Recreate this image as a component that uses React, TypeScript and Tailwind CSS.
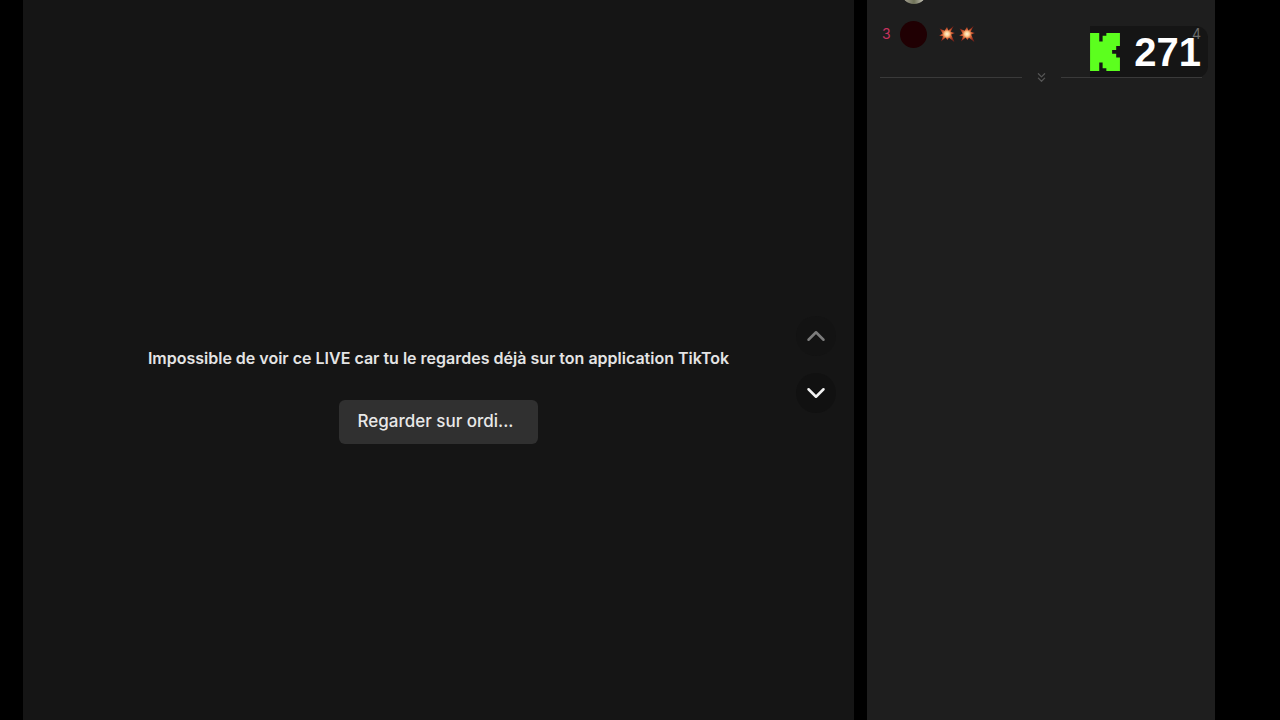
import { ChevronDown, ChevronUp, ChevronsDown } from 'lucide-react';

const BURST_POINTS =
  '8,1 9.4,4.6 14.6,0 11.6,5.8 16,7 12.2,8.6 15.4,16 10,11.8 8.4,14 6.6,11.6 2,15.6 4,10.2 0,9.8 3.6,7.4 0.6,2.4 5.6,4.8';

function Burst() {
  return (
    <svg viewBox="0 0 16 16" className="size-4" aria-hidden="true">
      <defs>
        <radialGradient id="burst">
          <stop offset="0%" stopColor="#fff6d8" />
          <stop offset="30%" stopColor="#fbc98c" />
          <stop offset="55%" stopColor="#d9683a" />
          <stop offset="100%" stopColor="#8a2318" />
        </radialGradient>
      </defs>
      <polygon points={BURST_POINTS} fill="url(#burst)" />
    </svg>
  );
}

function KLogo() {
  return (
    <svg viewBox="0 0 88 112" className="h-[38px] w-[30px]" aria-hidden="true">
      <path
        fill="#5cff1e"
        d="M0 0H27V25H37V8H48V0H88V38H77V50H65V61H77V72H88V112H48V104H37V87H27V112H0Z"
      />
    </svg>
  );
}

function LivePlayer() {
  return (
    <main className="relative flex flex-1 flex-col items-center justify-center bg-[#151515]">
      <div className="flex flex-col items-center gap-[30px] pt-[70px]">
        <p className="text-base font-semibold text-[#e4e4e4]">
          Impossible de voir ce LIVE car tu le regardes déjà sur ton application TikTok
        </p>
        <button className="h-11 rounded-md bg-[#303030] pr-6 pl-[18px] text-[17px] font-medium text-[#e8e8e8]">
          Regarder sur ordi...
        </button>
      </div>

      <div className="absolute inset-y-0 right-[18px] flex flex-col items-center justify-center gap-[17px] pt-2">
        <button
          aria-label="LIVE précédent"
          className="flex size-10 items-center justify-center rounded-full bg-[#131313] text-[#7c7c7c]"
        >
          <ChevronUp size={30} strokeWidth={2} />
        </button>
        <button
          aria-label="LIVE suivant"
          className="flex size-10 items-center justify-center rounded-full bg-[#111111] text-[#f2f2f2]"
        >
          <ChevronDown size={30} strokeWidth={2} />
        </button>
      </div>
    </main>
  );
}

function ViewerBadge() {
  return (
    <div className="absolute top-[26px] right-[7px] flex h-[52px] items-center gap-[14px] rounded-r-xl bg-[#151515] pr-[7px]">
      <KLogo />
      <span className="font-['Liberation_Sans',sans-serif] text-[40px] leading-none font-bold text-white">
        271
      </span>
    </div>
  );
}

function Ranking() {
  return (
    <aside className="relative w-[348px] shrink-0 bg-[#1e1e1e]">
      <ViewerBadge />

      <div className="relative">
        {/* row scrolled out of the list, only the foot of its avatar shows */}
        <div className="flex h-1 items-end overflow-hidden pl-[34px]">
          <div className="size-[26px] shrink-0 rounded-full bg-linear-to-r from-[#b5aea4] via-[#6f7258] to-[#e6e0da]" />
        </div>

        <div className="mt-4 flex h-7 items-center pr-[14px] pl-[15px]">
          <span className="w-[18px] text-sm text-[#c8325f]">3</span>
          <div className="size-[27px] rounded-full bg-[#200003]" />
          <div className="ml-3 flex gap-1">
            <Burst />
            <Burst />
          </div>
          <span className="ml-auto text-sm text-[#6c6c6c]">4</span>
        </div>

        <div className="mt-[22px] flex items-center gap-3 px-[13px] text-[#555555]">
          <div className="h-px flex-1 bg-[#3a3a3a]" />
          <ChevronsDown size={15} />
          <div className="h-px flex-1 bg-[#3a3a3a]" />
        </div>
      </div>
    </aside>
  );
}

export default function App() {
  return (
    <div className="flex min-h-screen gap-[13px] bg-black pr-[65px] pl-[23px] font-['Inter',sans-serif]">
      <LivePlayer />
      <Ranking />
    </div>
  );
}
